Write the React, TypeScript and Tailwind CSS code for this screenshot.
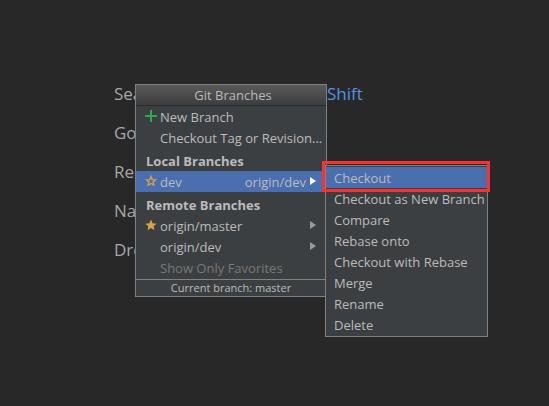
import React from 'react';

const shortcuts = [
  { label: 'Sea', keys: 'Shift' },
  { label: 'Go', keys: '' },
  { label: 'Rec', keys: '' },
  { label: 'Na', keys: '' },
  { label: 'Dro', keys: '' },
];

const actions = [
  'Checkout',
  'Checkout as New Branch',
  'Compare',
  'Rebase onto',
  'Checkout with Rebase',
  'Merge',
  'Rename',
  'Delete',
];

function Plus() {
  return (
    <svg width="12" height="12" viewBox="0 0 12 12" aria-hidden="true">
      <path d="M5 0h2v5h5v2H7v5H5V7H0V5h5z" fill="#2fa84f" />
    </svg>
  );
}

function Star({ filled }: { filled?: boolean }) {
  return (
    <svg width="12" height="12" viewBox="0 0 12 12" aria-hidden="true">
      <path
        d={
          filled
            ? 'M6 .6l1.6 3.7 4 .4-3 2.6.9 3.9L6 9.1l-3.5 2.1.9-3.9-3-2.6 4-.4z'
            : 'M6 1.6l1.3 3 3.3.3-2.5 2.1.8 3.2L6 8.5l-2.9 1.7.8-3.2L1.4 4.9l3.3-.3z'
        }
        fill={filled ? '#d9a343' : 'none'}
        stroke={filled ? 'none' : '#d9a343'}
        strokeWidth={1.3}
      />
    </svg>
  );
}

function Arrow({ active }: { active?: boolean }) {
  return (
    <svg width="6" height="8" viewBox="0 0 6 8" className="shrink-0" aria-hidden="true">
      <path d="M0 0l6 4-6 4z" fill={active ? '#ffffff' : '#999b9c'} />
    </svg>
  );
}

type RowProps = {
  label: string;
  icon?: React.ReactNode;
  remote?: string;
  submenu?: boolean;
  active?: boolean;
  muted?: boolean;
};

function Row({ label, icon, remote, submenu, active, muted }: RowProps) {
  return (
    <button
      type="button"
      className={`flex h-[21px] w-full items-center pl-[9px] pr-[10px] text-left ${active ? 'bg-[#4b6eaf]' : ''} ${muted ? 'text-[#777777]' : ''}`}
    >
      <span className="w-[15px] shrink-0 pb-0.5">{icon}</span>
      <span className="flex-1 whitespace-nowrap">{label}</span>
      {remote && <span className="pr-1">{remote}</span>}
      {submenu && (
        <span className="pb-0.5">
          <Arrow active={active} />
        </span>
      )}
    </button>
  );
}

function Heading({ children }: { children: React.ReactNode }) {
  return <h3 className="flex h-[23px] items-center pl-[10px] pt-0.5 font-bold">{children}</h3>;
}

export default function App() {
  return (
    <main className="relative min-h-screen overflow-hidden bg-[#282828] pl-[114px] pt-[74px] font-['Open_Sans','Noto_Sans',sans-serif] text-[13px] leading-5 text-[#bbbbbb]">
      <ul className="text-[17px] leading-[39px] text-[#a6a6a6]">
        {shortcuts.map((s) => (
          <li key={s.label} className="flex whitespace-nowrap">
            <span className="w-[213px] shrink-0">{s.label}</span>
            {s.keys && <span className="text-[#5294e2]">{s.keys}</span>}
          </li>
        ))}
      </ul>

      <section className="absolute left-[135px] top-[84px] w-[192px] border border-[#808080] bg-[#3c3f41]">
        <h2 className="flex h-[21px] items-center justify-center border-b border-[#292b2c] bg-linear-to-b from-[#5a5a5a] to-[#3d3d3d] pl-1">
          Git Branches
        </h2>
        <Row label="New Branch" icon={<Plus />} />
        <Row label="Checkout Tag or Revision..." />
        <Heading>Local Branches</Heading>
        <Row label="dev" icon={<Star />} remote="origin/dev" submenu active />
        <Heading>Remote Branches</Heading>
        <Row label="origin/master" icon={<Star filled />} submenu />
        <Row label="origin/dev" submenu />
        <Row label="Show Only Favorites" muted />
        <footer className="mt-px flex h-[17px] items-center justify-center border-t border-[#808080] text-[11px]">
          Current branch: master
        </footer>
      </section>

      <nav className="absolute left-[325px] top-[165px] w-[163px] border border-[#808080] bg-[#3c3f41] pb-px pt-px">
        {actions.map((a, i) => (
          <button
            type="button"
            key={a}
            className={`flex h-[21px] w-full items-center whitespace-nowrap pl-2 text-left ${i === 0 ? 'bg-[#4b6eaf]' : ''}`}
          >
            {a}
          </button>
        ))}
      </nav>
      <div className="pointer-events-none absolute left-[322px] top-[161px] h-[31px] w-[168px] border-3 border-[#fb3131]" />
    </main>
  );
}
